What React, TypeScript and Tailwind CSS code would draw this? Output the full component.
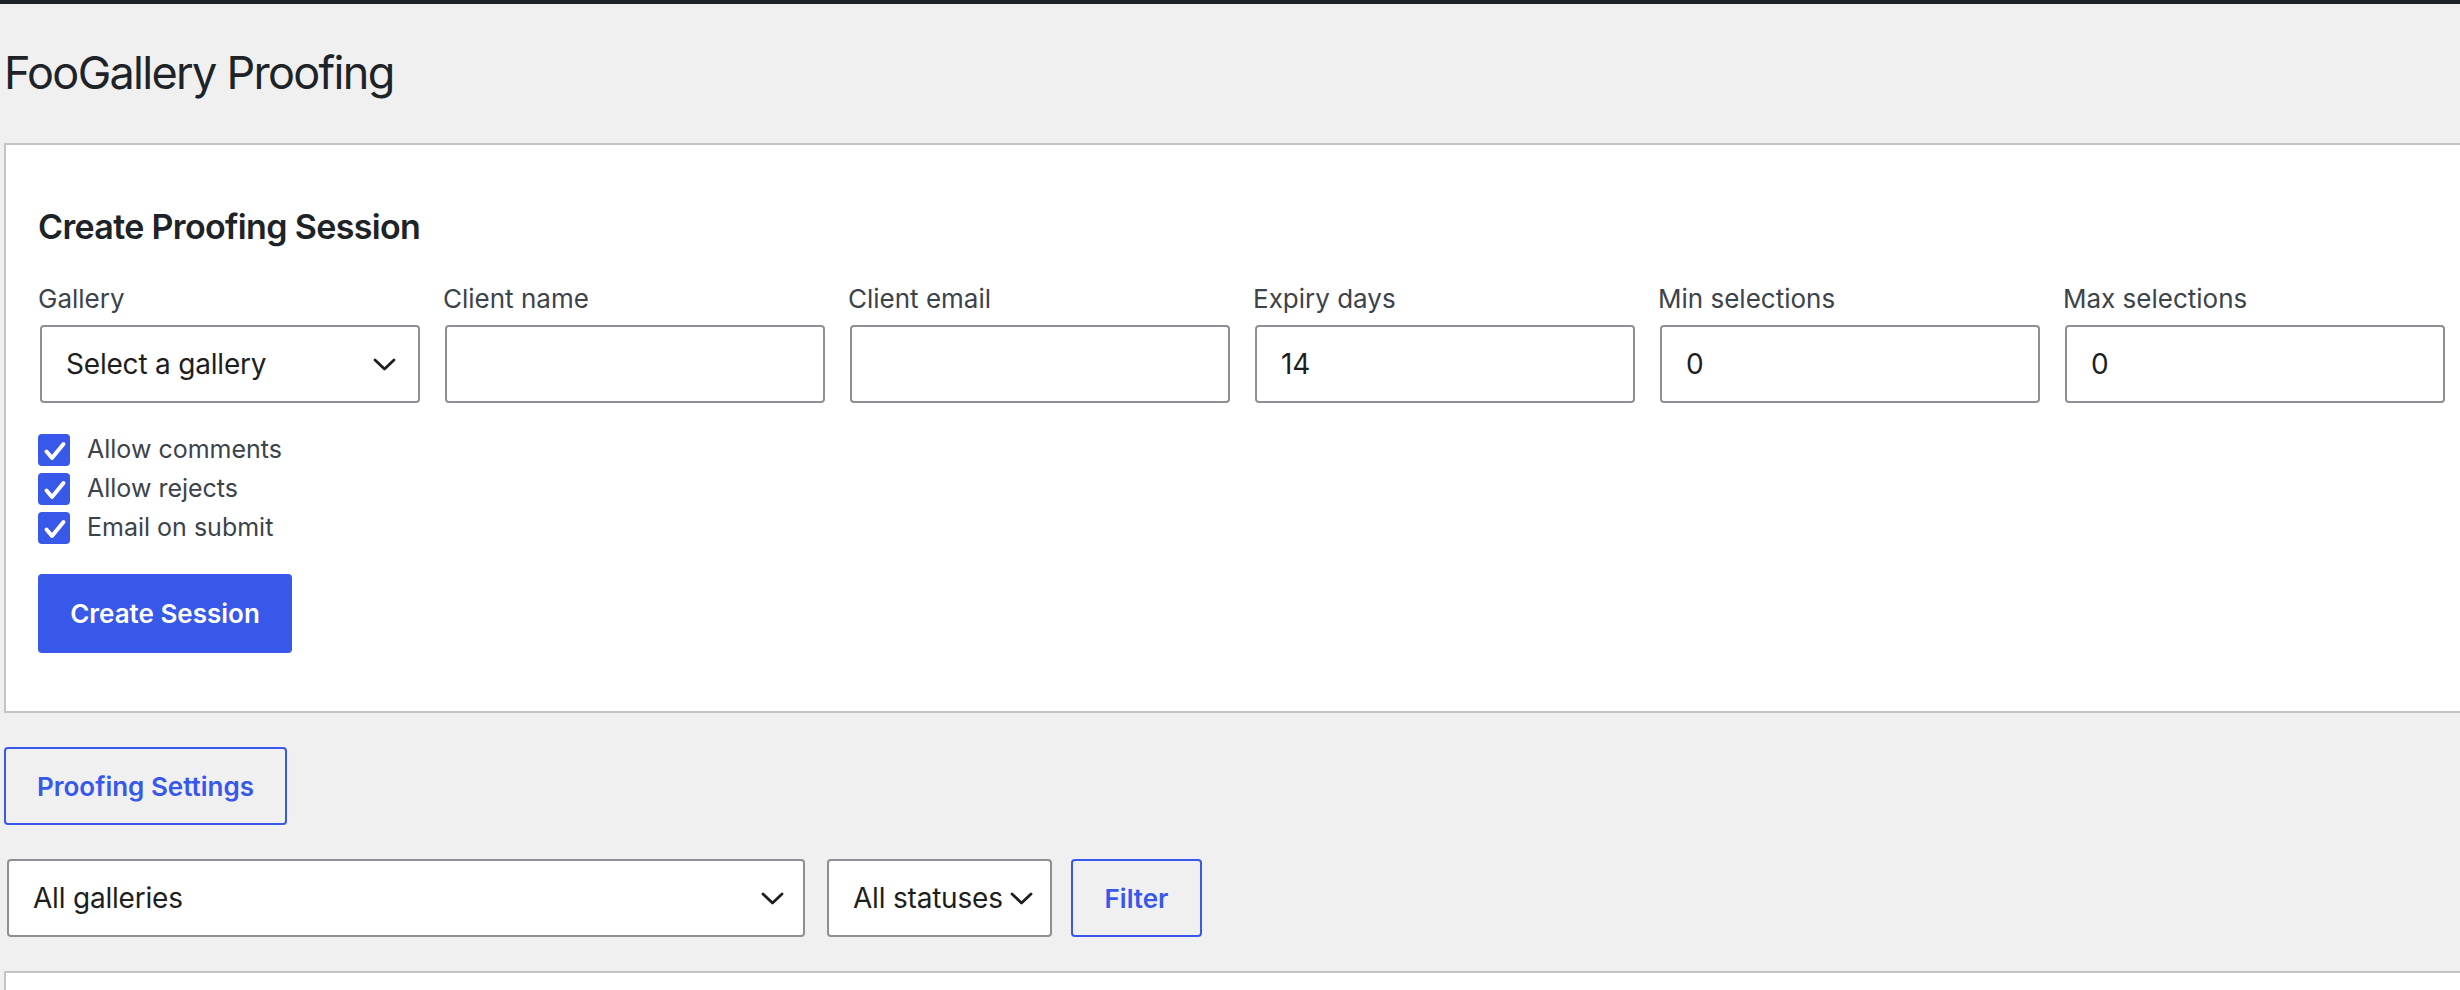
const fields = [
  { label: 'Gallery', select: 'Select a gallery' },
  { label: 'Client name', value: '' },
  { label: 'Client email', value: '' },
  { label: 'Expiry days', value: '14' },
  { label: 'Min selections', value: '0' },
  { label: 'Max selections', value: '0' },
]

const options = ['Allow comments', 'Allow rejects', 'Email on submit']

function Chevron() {
  return (
    <svg width="23" height="13" viewBox="0 0 23 13" fill="none" className="shrink-0">
      <polyline points="2,2 11.5,11 21,2" stroke="#1e1e1e" strokeWidth="2.8" strokeLinecap="round" strokeLinejoin="round" />
    </svg>
  )
}

function Check() {
  return (
    <span className="flex h-[32px] w-[32px] shrink-0 items-center justify-center rounded-[4px] bg-[#3858e9]">
      <svg width="32" height="32" viewBox="0 0 32 32" fill="none">
        <polyline points="8.5,17.5 14,24 25.5,10" stroke="#fff" strokeWidth="4" strokeLinecap="round" strokeLinejoin="round" />
      </svg>
    </span>
  )
}

export default function App() {
  const box = "h-[78px] rounded-[4px] border-2 border-[#8c8f94] bg-white text-[28px] tracking-[-0.2px] text-[#1e1e1e]"

  return (
    <div className="min-h-screen overflow-hidden bg-[#f0f0f1] [font-family:Inter,'Noto_Sans',sans-serif]">
      <div className="h-[4px] bg-[#1d2327]" />
      <div className="pl-[4px]">
        <h1 className="mt-[39px] text-[45px] leading-[60px] font-normal tracking-[-1.7px] text-[#1d2327]">FooGallery Proofing</h1>

        <div className="mt-[40px] border-2 border-r-0 border-[#c3c4c7] bg-white pl-[32px] pt-[60px] pb-[58px]">
          <h2 className="text-[34px] leading-[44px] font-semibold tracking-[-0.65px] text-[#1d2327]">Create Proofing Session</h2>

          <div className="mt-[32px] grid grid-cols-[repeat(6,382px)] gap-x-[23px]">
            {fields.map(f => (
              <div key={f.label}>
                <label className="block text-[26px] leading-[36px] text-[#3c434a]">{f.label}</label>
                {f.select ? (
                  <div className={`mt-[8px] ml-[2px] flex w-[380px] items-center justify-between pl-[24px] pr-[22px] ${box}`}>
                    <span>{f.select}</span>
                    <Chevron />
                  </div>
                ) : (
                  <input readOnly defaultValue={f.value}
                    className={`mt-[8px] ml-[2px] block w-[380px] px-[24px] outline-none ${box}`} />
                )}
              </div>
            ))}
          </div>

          <div className="mt-[27px] flex flex-col">
            {options.map(o => (
              <div key={o} className="flex h-[39px] items-center gap-[17px]">
                <Check />
                <span className="text-[25px] text-[#3c434a]">{o}</span>
              </div>
            ))}
          </div>

          <button className="mt-[27px] h-[79px] w-[254px] rounded-[4px] bg-[#3858e9] text-[26px] font-semibold text-white">
            Create Session
          </button>
        </div>

        <button className="mt-[34px] h-[78px] w-[283px] rounded-[4px] border-2 border-[#3858e9] text-[26px] font-semibold text-[#3858e9]">
          Proofing Settings
        </button>

        <div className="mt-[34px] flex items-center">
          <div className={`ml-[3px] flex w-[798px] items-center justify-between pl-[24px] pr-[19px] ${box}`}>
            <span>All galleries</span>
            <Chevron />
          </div>
          <div className={`ml-[22px] flex w-[225px] items-center gap-[7px] pl-[24px] ${box}`}>
            <span>All statuses</span>
            <Chevron />
          </div>
          <button className="ml-[19px] h-[78px] w-[131px] rounded-[4px] border-2 border-[#3858e9] text-[26px] font-semibold text-[#3858e9]">
            Filter
          </button>
        </div>

        <div className="mt-[34px] h-[200px] border-2 border-r-0 border-b-0 border-[#c3c4c7] bg-white" />
      </div>
    </div>
  )
}
